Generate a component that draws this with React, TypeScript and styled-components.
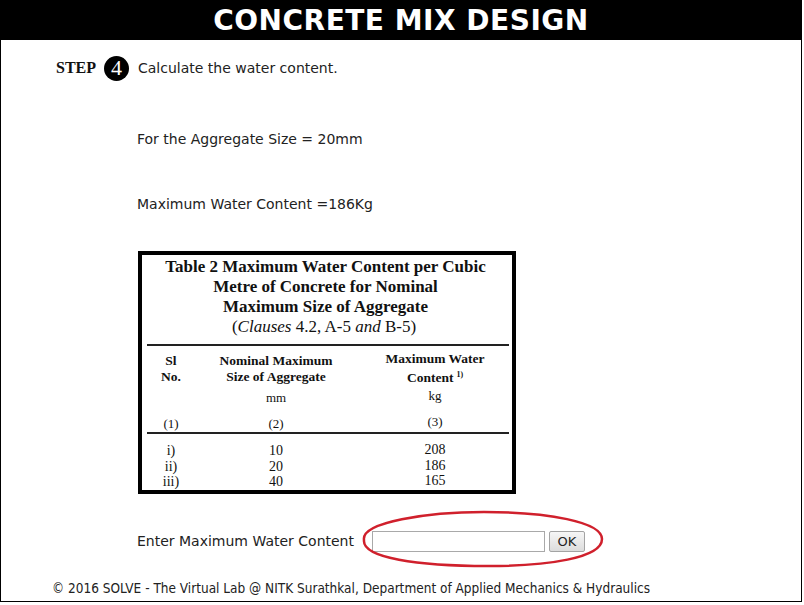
import React from "react";
import styled, { createGlobalStyle } from "styled-components";

const Global = createGlobalStyle`
  html, body { margin: 0; padding: 0; background: #fff; }
  body { font-family: "DejaVu Sans", Verdana, sans-serif; }
`;

const Page = styled.div`
  width: 800px;
  height: 601px;
  border: 1px solid #000;
  border-top: none;
  color: #222;
  font-size: 14px;
  display: flex;
  flex-direction: column;
`;

const Header = styled.div`
  width: 802px;
  height: 40px;
  flex: none;
  margin-left: -1px;
  background: #000;
  color: #fff;
  display: flex;
  align-items: center;
  justify-content: center;
  font-family: "DejaVu Sans", sans-serif;
  font-weight: bold;
  font-size: 28px;
  letter-spacing: 0.5px;
`;

const Content = styled.div`
  display: flex;
  flex-direction: column;
  padding-left: 136px;
  flex: 1;
`;

const StepRow = styled.div`
  display: flex;
  align-items: center;
  margin-left: -81px;
  margin-top: 15px;
  height: 26px;
`;

const StepLabel = styled.span`
  font-family: "Liberation Serif", serif;
  font-weight: bold;
  font-size: 16px;
  color: #111;
  margin-right: 8px;
`;

const StepCircle = styled.span`
  width: 25px;
  height: 25px;
  border-radius: 50%;
  background: #000;
  color: #fff;
  display: flex;
  align-items: center;
  justify-content: center;
  font-family: "Liberation Serif", serif;
  font-size: 22px;
  margin-right: 9px;
`;

const Line = styled.div<{ $top: number }>`
  margin-top: ${(p) => p.$top}px;
  height: 16px;
  line-height: 16px;
`;

const Scan = styled.div`
  margin-top: 39px;
  margin-left: 1px;
  width: 370px;
  height: 235px;
  border: 4px solid #000;
  background: #fff;
  color: #111;
  font-family: "Liberation Serif", serif;
  display: flex;
  flex-direction: column;
  align-items: stretch;
`;

const Title = styled.div`
  text-align: center;
  font-weight: bold;
  font-size: 17px;
  line-height: 20px;
  margin-top: 2px;
  margin-right: 3px;
`;

const Clauses = styled.div`
  text-align: center;
  font-size: 17px;
  line-height: 20px;
  margin-right: 6px;
`;

const Rule = styled.div<{ $top: number }>`
  height: 2px;
  background: #222;
  margin: ${(p) => p.$top}px 3px 0 5px;
`;

const Cols = styled.div<{ $top: number }>`
  display: grid;
  grid-template-columns: 58px 152px 1fr;
  margin-top: ${(p) => p.$top}px;
  text-align: center;
`;

const HeadCell = styled.div<{ $last?: boolean }>`
  font-weight: bold;
  font-size: 13.5px;
  line-height: 16px;
  padding-left: ${(p) => (p.$last ? 6 : 0)}px;
  margin-top: ${(p) => (p.$last ? 3 : 5)}px;
`;

const SmallCell = styled.div<{ $top?: number; $last?: boolean }>`
  font-size: 13px;
  line-height: 16px;
  margin-top: ${(p) => p.$top ?? 0}px;
  padding-left: ${(p) => (p.$last ? 6 : 0)}px;
`;

const DataCell = styled.div<{ $last?: boolean }>`
  font-size: 14px;
  line-height: 15.5px;
  padding-left: ${(p) => (p.$last ? 6 : 0)}px;
  margin-top: ${(p) => (p.$last ? -1 : 0)}px;
`;

const Sup = styled.sup`
  font-size: 8px;
  vertical-align: 5px;
  margin-left: 3px;
`;

const InputRow = styled.div`
  display: flex;
  align-items: center;
  margin-top: 36px;
  position: relative;
  height: 22px;
`;

const Field = styled.input`
  width: 169px;
  height: 17px;
  border: 1px solid #a9a9a9;
  padding: 1px;
  margin-left: 18px;
  font-size: 13px;
`;

const OkButton = styled.button`
  width: 36px;
  height: 21px;
  margin-left: 4px;
  padding: 0;
  border: 1px solid #a3a3a3;
  border-radius: 2px;
  background: linear-gradient(#f6f6f6, #dcdcdc);
  font-family: "DejaVu Sans", sans-serif;
  font-size: 13px;
  color: #222;
`;

const Ellipse = styled.svg`
  position: absolute;
  left: 221px;
  top: -20px;
  pointer-events: none;
`;

const Footer = styled.div`
  flex: none;
  height: 16px;
  line-height: 16px;
  padding: 0 0 5px 51px;
  font-family: "DejaVu Sans Condensed", "DejaVu Sans", sans-serif;
  font-size: 13.5px;
  color: #222;
`;

const rows = [
  ["i)", "10", "208"],
  ["ii)", "20", "186"],
  ["iii)", "40", "165"],
];

export default function App() {
  return (
    <>
      <Global />
      <Page>
        <Header>CONCRETE MIX DESIGN</Header>
        <Content>
          <StepRow>
            <StepLabel>STEP</StepLabel>
            <StepCircle>4</StepCircle>
            <span>Calculate the water content.</span>
          </StepRow>
          <Line $top={50}>For the Aggregate Size = 20mm</Line>
          <Line $top={49}>Maximum Water Content =186Kg</Line>
          <Scan>
            <Title>
              Table 2 Maximum Water Content per Cubic
              <br />
              Metre of Concrete for Nominal
              <br />
              Maximum Size of Aggregate
            </Title>
            <Clauses>
              (<i>Clauses</i> 4.2, A-5 <i>and</i> B-5)
            </Clauses>
            <Rule $top={7} />
            <Cols $top={2}>
              <HeadCell>
                Sl
                <br />
                No.
              </HeadCell>
              <HeadCell>
                Nominal Maximum
                <br />
                Size of Aggregate
              </HeadCell>
              <HeadCell $last>
                Maximum Water
                <br />
                Content<Sup>1)</Sup>
              </HeadCell>
              <SmallCell />
              <SmallCell $top={4}>mm</SmallCell>
              <SmallCell $top={2} $last>
                kg
              </SmallCell>
              <SmallCell $top={10}>(1)</SmallCell>
              <SmallCell $top={10}>(2)</SmallCell>
              <SmallCell $top={8} $last>
                (3)
              </SmallCell>
            </Cols>
            <Rule $top={0} />
            <Cols $top={9}>
              {rows.map((r) => (
                <React.Fragment key={r[0]}>
                  <DataCell>{r[0]}</DataCell>
                  <DataCell>{r[1]}</DataCell>
                  <DataCell $last>{r[2]}</DataCell>
                </React.Fragment>
              ))}
            </Cols>
          </Scan>
          <InputRow>
            <span>Enter Maximum Water Content</span>
            <Field />
            <OkButton>OK</OkButton>
            <Ellipse width="250" height="60" viewBox="0 0 250 60">
              <path
                d="M6 30 C 3 12, 70 2, 126 2 C 190 2, 244 12, 244 29 C 244 48, 190 56, 130 56 C 60 56, 4 48, 6 30 Z"
                fill="none"
                stroke="#d0202c"
                strokeWidth="2.5"
              />
            </Ellipse>
          </InputRow>
        </Content>
        <Footer>
          © 2016 SOLVE - The Virtual Lab @ NITK Surathkal, Department of Applied Mechanics &amp; Hydraulics
        </Footer>
      </Page>
    </>
  );
}
